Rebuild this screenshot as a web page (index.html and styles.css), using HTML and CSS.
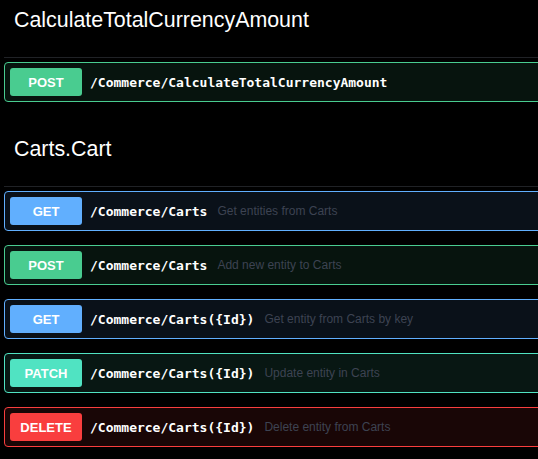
FILE: index.html
```html
<!DOCTYPE html>
<html lang="en">
  <head>
    <meta charset="UTF-8">
    <title>Commerce API</title>
    <link rel="stylesheet" href="styles.css">
  </head>
  <body>
    <div class="operations">
      <div class="tag-section">
        <h3 class="tag-title">CalculateTotalCurrencyAmount</h3>
        <div class="opblock opblock-post">
          <span class="method">POST</span>
          <span class="path">/Commerce/CalculateTotalCurrencyAmount</span>
        </div>
      </div>

      <div class="tag-section">
        <h3 class="tag-title">Carts.Cart</h3>
        <div class="opblock opblock-get">
          <span class="method">GET</span>
          <span class="path">/Commerce/Carts</span>
          <span class="summary">Get entities from Carts</span>
        </div>
        <div class="opblock opblock-post">
          <span class="method">POST</span>
          <span class="path">/Commerce/Carts</span>
          <span class="summary">Add new entity to Carts</span>
        </div>
        <div class="opblock opblock-get">
          <span class="method">GET</span>
          <span class="path">/Commerce/Carts({Id})</span>
          <span class="summary">Get entity from Carts by key</span>
        </div>
        <div class="opblock opblock-patch">
          <span class="method">PATCH</span>
          <span class="path">/Commerce/Carts({Id})</span>
          <span class="summary">Update entity in Carts</span>
        </div>
        <div class="opblock opblock-delete">
          <span class="method">DELETE</span>
          <span class="path">/Commerce/Carts({Id})</span>
          <span class="summary">Delete entity from Carts</span>
        </div>
      </div>
    </div>
  </body>
</html>
```

FILE: styles.css
```css
* {
  box-sizing: border-box;
  margin: 0;
  padding: 0;
}

body {
  background: #000;
  font-family: 'Liberation Sans', Arial, sans-serif;
  color: #fff;
  overflow: hidden;
}

.operations {
  width: 560px;
  padding-left: 4px;
}

.tag-section {
  margin-bottom: 27px;
}

.tag-title {
  font-size: 21.4px;
  font-weight: normal;
  line-height: 24px;
  padding: 8px 20px 25px 10px;
  border-bottom: 1px solid #202226;
  margin-bottom: 4px;
}

.opblock {
  display: flex;
  align-items: center;
  padding: 5px;
  margin-bottom: 14px;
  border: 1px solid;
  border-radius: 4px;
}

.method {
  width: 72px;
  height: 28px;
  flex-shrink: 0;
  display: flex;
  align-items: center;
  justify-content: center;
  border-radius: 3px;
  font-size: 13px;
  font-weight: bold;
  color: #fff;
}

.path {
  padding: 0 10px 0 8px;
  font-family: 'DejaVu Sans Mono', monospace;
  font-size: 13px;
  font-weight: bold;
  color: #fff;
}

.summary {
  font-size: 12px;
  color: #3d4352;
}

.opblock-get {
  border-color: #61affe;
  background: #0a1119;
}

.opblock-get .method {
  background: #61affe;
}

.opblock-post {
  border-color: #49cc90;
  background: #07140e;
}

.opblock-post .method {
  background: #49cc90;
}

.opblock-patch {
  border-color: #50e3c2;
  background: #081713;
}

.opblock-patch .method {
  background: #50e3c2;
}

.opblock-delete {
  border-color: #f93e3e;
  background: #190606;
}

.opblock-delete .method {
  background: #f93e3e;
}
```
